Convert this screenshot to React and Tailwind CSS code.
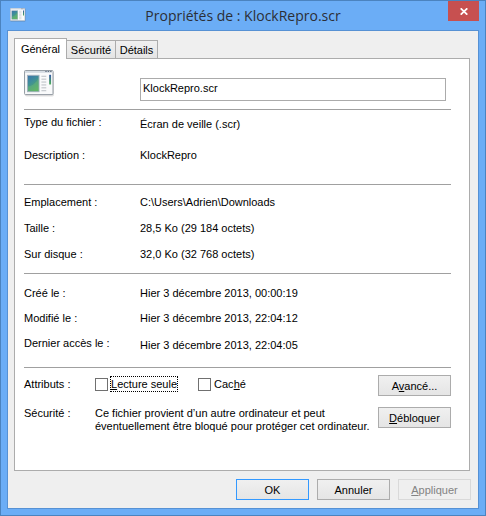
import React from "react";

function Row({ label, children, uneven }) {
  return (
    <div className={uneven ? "flex h-4" : "flex"}>
      <dt className="w-[116px] shrink-0 self-start">{label}</dt>
      <dd className="self-end whitespace-nowrap">{children}</dd>
    </div>
  );
}

function Button({ children, look = "border-[#acacac] bg-linear-to-b from-[#f0f0f0] to-[#e5e5e5]", ...rest }) {
  return (
    <button
      type="button"
      className={`h-[21px] w-[73px] shrink-0 border text-center leading-[14px] ${look}`}
      {...rest}
    >
      {children}
    </button>
  );
}

function ProgramIcon({ className }) {
  return (
    <svg className={className} viewBox="0 0 32 28" aria-hidden="true">
      <defs>
        <linearGradient id="screen" x1="0" y1="0" x2="0.5" y2="1">
          <stop offset="0" stopColor="#3b72ad" />
          <stop offset="0.45" stopColor="#3f8e9a" />
          <stop offset="1" stopColor="#55ad62" />
        </linearGradient>
        <linearGradient id="strip" x1="0" y1="0" x2="0" y2="1">
          <stop offset="0" stopColor="#3459a5" />
          <stop offset="1" stopColor="#4cae58" />
        </linearGradient>
      </defs>
      <rect x="1" y="1.5" width="30" height="26" rx="1.5" fill="#000" opacity="0.12" />
      <rect x="0.5" y="0.5" width="29.5" height="25" rx="1" fill="#f9fafb" stroke="#8e969e" />
      <rect x="1" y="1" width="28.5" height="2" fill="#d5dce3" />
      <path d="M22 1.5h1.5M24.5 1.5h1.5M27 1.5h1.5" stroke="#59677a" />
      <rect x="3.5" y="5.5" width="12" height="17" fill="url(#screen)" stroke="#a3b2bf" />
      <path d="M4 17C8 17 13 13 15 8V22H4Z" fill="#79c475" opacity="0.35" />
      <path d="M18 6.5h5M18 9.5h5M18 12.5h5M18 15.5h5M18 18.5h5M18 21.5h5" stroke="#b7bcc2" />
      <rect x="26" y="5" width="2" height="10" fill="url(#strip)" />
    </svg>
  );
}

function Check({ name, children, focused }) {
  return (
    <label className="flex items-center gap-[2px]">
      <input
        type="checkbox"
        name={name}
        className="size-[13px] shrink-0 appearance-none border border-[#707070] bg-white"
      />
      <span
        className={
          focused
            ? "border border-dotted border-black whitespace-nowrap"
            : "border border-transparent whitespace-nowrap"
        }
      >
        {children}
      </span>
    </label>
  );
}

export default function App() {
  return (
    <div className="flex min-h-screen flex-col border border-[#4b83bf] bg-[#6badf6] px-1.5 pb-1.5 font-['Liberation_Sans',Arial,sans-serif] text-[11px] leading-[14px] text-black">
      <header className="relative flex h-[29px] shrink-0 items-center justify-center">
        <ProgramIcon className="absolute top-[7px] left-[3px] h-[14px] w-4" />
        <h1 className="font-['Open_Sans',sans-serif] text-sm leading-5 text-[#2b2f36]">
          Propriétés de : KlockRepro.scr
        </h1>
        <button
          type="button"
          aria-label="Fermer"
          className="absolute top-0 right-0 flex h-5 w-[31px] items-center justify-center bg-[#c75050]"
        >
          <svg className="h-[7px] w-2" viewBox="0 0 8 7" aria-hidden="true">
            <path d="M0.7 0.3L7.3 6.7M7.3 0.3L0.7 6.7" stroke="#fff" strokeWidth="1.7" />
          </svg>
        </button>
      </header>

      <main className="flex flex-1 flex-col border border-[#5691d4] bg-[#efefef] pt-[7px] pr-[7px] pb-2 pl-1.5">
        <div role="tablist" className="flex items-end">
          <button
            type="button"
            role="tab"
            aria-selected="true"
            className="z-10 -mb-px h-[21px] w-[53px] border border-b-0 border-[#acacac] bg-white"
          >
            Général
          </button>
          <button
            type="button"
            role="tab"
            aria-selected="false"
            className="h-[18px] w-[49px] border border-b-0 border-l-0 border-[#acacac] bg-linear-to-b from-[#f0f0f0] to-[#e5e5e5]"
          >
            Sécurité
          </button>
          <button
            type="button"
            role="tab"
            aria-selected="false"
            className="h-[18px] w-[42px] border border-b-0 border-l-0 border-[#acacac] bg-linear-to-b from-[#f0f0f0] to-[#e5e5e5]"
          >
            Détails
          </button>
        </div>

        <section
          role="tabpanel"
          className="mr-px flex-1 border border-[#acacac] bg-white pr-[18px] pl-[9px]"
        >
          <div className="flex h-[50px] items-end gap-[85px] pr-[5px] pb-2">
            <ProgramIcon className="mb-1 h-[27px] w-[31px] shrink-0" />
            <input
              type="text"
              aria-label="Nom du fichier"
              defaultValue="KlockRepro.scr"
              className="h-[23px] min-w-0 flex-1 border border-[#ababab] bg-white px-[2px] pb-1"
            />
          </div>

          <dl className="flex flex-col gap-[17px] border-t border-[#a0a0a0] pt-[5px] pb-[22px]">
            <Row label="Type du fichier :" uneven>
              Écran de veille (.scr)
            </Row>
            <Row label="Description :">KlockRepro</Row>
          </dl>
          <dl className="flex flex-col gap-3 border-t border-[#a0a0a0] pt-[10px] pb-3">
            <Row label="Emplacement :">C:\Users\Adrien\Downloads</Row>
            <Row label="Taille :">28,5 Ko (29 184 octets)</Row>
            <Row label="Sur disque :">32,0 Ko (32 768 octets)</Row>
          </dl>
          <dl className="flex flex-col gap-[11px] border-t border-[#a0a0a0] pt-3 pb-[15px]">
            <Row label="Créé le :">Hier 3 décembre 2013, 00:00:19</Row>
            <Row label="Modifié le :">Hier 3 décembre 2013, 22:04:12</Row>
            <Row label="Dernier accès le :" uneven>
              Hier 3 décembre 2013, 22:04:05
            </Row>
          </dl>

          <div className="flex flex-col gap-[11px] border-t border-[#a0a0a0] pt-[7px]">
            <div className="flex items-start">
              <div className="flex h-[18px] flex-1 items-center">
                <span className="w-[71px] shrink-0">Attributs :</span>
                <div className="flex gap-5">
                  <Check name="readonly" focused>
                    <u>L</u>ecture seule
                  </Check>
                  <Check name="hidden">
                    Cac<u>h</u>é
                  </Check>
                </div>
              </div>
              <Button>
                A<u>v</u>ancé...
              </Button>
            </div>
            <div className="flex items-start leading-[13px]">
              <span className="w-[71px] shrink-0">Sécurité :</span>
              <p className="min-w-0 flex-1 whitespace-nowrap">
                Ce fichier provient d’un autre ordinateur et peut
                <br />
                éventuellement être bloqué pour protéger cet ordinateur.
              </p>
              <Button>
                <u>D</u>ébloquer
              </Button>
            </div>
          </div>
        </section>

        <footer className="flex justify-end gap-2 pt-2">
          <Button look="border-[#3399ff] bg-linear-to-b from-[#f0f0f0] to-[#e5e5e5]">OK</Button>
          <Button>Annuler</Button>
          <Button look="border-[#d9d9d9] bg-[#efefef] text-[#838383]" disabled>
            <u>A</u>ppliquer
          </Button>
        </footer>
      </main>
    </div>
  );
}
